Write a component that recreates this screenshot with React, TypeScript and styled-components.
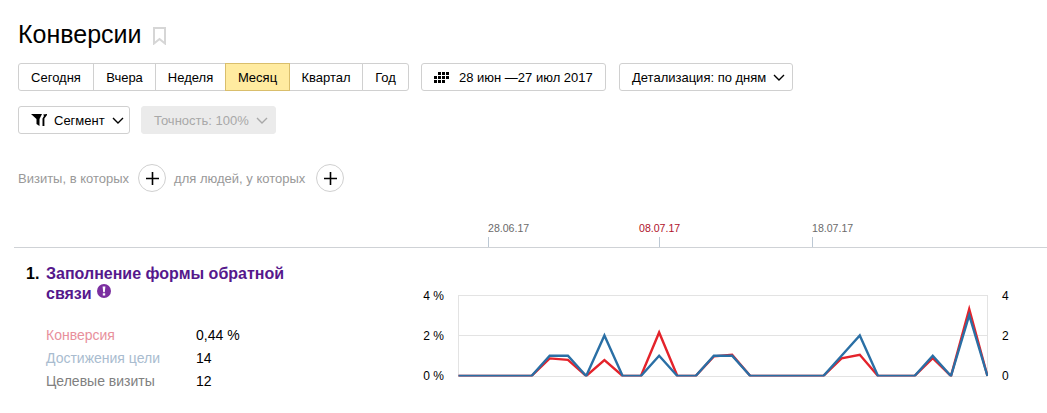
import React from "react";
import styled, { createGlobalStyle } from "styled-components";

const GlobalStyle = createGlobalStyle`
  html, body {
    margin: 0;
    background: #fff;
    overflow: hidden;
  }
  body {
    color: #000;
    font-family: "Liberation Sans", Arial, sans-serif;
    font-size: 13px;
  }
`;

const Page = styled.div`
  height: 413px;
  overflow: hidden;
  width: 1047px;
`;

const Header = styled.div`
  padding: 0 18px;
`;

const TitleRow = styled.div`
  align-items: center;
  box-sizing: border-box;
  display: flex;
  height: 63px;
  padding-top: 5px;
`;

const Title = styled.h1`
  font-size: 25px;
  font-weight: normal;
  margin: 0 11px 0 0;
`;

const Bookmark = styled.svg`
  fill: none;
  height: 18px;
  margin-top: 3px;
  stroke: #d6d6d6;
  stroke-width: 2;
  width: 13px;
`;

const Toolbar = styled.div`
  display: flex;
  height: 28px;
  margin-bottom: 15px;
`;

const Group = styled.div`
  display: flex;
  margin-right: 12px;
`;

const Button = styled.div<{ $active?: boolean; $width: number }>`
  align-items: center;
  background: ${({ $active }) => ($active ? "#ffeba0" : "#fff")};
  border: 1px solid ${({ $active }) => ($active ? "#d9be6c" : "#d0d0d0")};
  box-sizing: border-box;
  display: flex;
  height: 28px;
  justify-content: center;
  margin-left: -1px;
  position: relative;
  width: ${({ $width }) => $width}px;
  z-index: ${({ $active }) => ($active ? 1 : 0)};

  &:first-child {
    border-radius: 3px 0 0 3px;
    margin-left: 0;
  }
  &:last-child {
    border-radius: 0 3px 3px 0;
  }
`;

const Select = styled.div<{ $width: number; $gap?: number; $disabled?: boolean }>`
  align-items: center;
  background: ${({ $disabled }) => ($disabled ? "#ebebeb" : "#fff")};
  border: 1px solid ${({ $disabled }) => ($disabled ? "#ebebeb" : "#d0d0d0")};
  border-radius: 3px;
  box-sizing: border-box;
  color: ${({ $disabled }) => ($disabled ? "#a8a8a8" : "#000")};
  display: flex;
  height: 28px;
  margin-right: ${({ $gap }) => $gap ?? 0}px;
  padding: 0 0 0 12px;
  width: ${({ $width }) => $width}px;
`;

const Chevron = styled.svg`
  fill: none;
  height: 7px;
  margin-left: 7px;
  stroke: currentColor;
  stroke-width: 1.4;
  width: 12px;
`;

const LeadIcon = styled.svg<{ $gap: number }>`
  fill: #000;
  flex-shrink: 0;
  margin-right: ${({ $gap }) => $gap}px;
`;

const FilterRow = styled.div`
  align-items: center;
  color: #999;
  display: flex;
  height: 30px;
  margin-top: 29px;
`;

const AddButton = styled.div<{ $left: number }>`
  align-items: center;
  background: #fff;
  border: 1px solid #d0d0d0;
  border-radius: 50%;
  box-sizing: border-box;
  display: flex;
  height: 28px;
  justify-content: center;
  margin: 0 8px 0 ${({ $left }) => $left}px;
  width: 28px;
`;

const Axis = styled.div`
  border-bottom: 1px solid #cfd2d6;
  display: flex;
  height: 39px;
  margin: 15px 0 0 14px;
  padding-left: 474px;
`;

const Tick = styled.div<{ $width: number; $holiday?: boolean }>`
  border-left: 1px solid #bcc8d4;
  box-sizing: border-box;
  color: ${({ $holiday }) => ($holiday ? "#b0122b" : "#6b6b6b")};
  font-size: 10.6px;
  height: 10px;
  line-height: 12px;
  margin-top: 29px;
  width: ${({ $width }) => $width}px;

  span {
    display: block;
    margin-left: ${({ $holiday }) => ($holiday ? -21 : -1)}px;
    margin-top: -15px;
    white-space: nowrap;
  }
`;

const Goal = styled.div`
  display: flex;
  padding: 16px 0 0 26px;
`;

const GoalInfo = styled.div`
  width: 390px;
`;

const GoalHeading = styled.div`
  display: flex;
`;

const GoalNumber = styled.div`
  font-size: 16px;
  font-weight: bold;
  line-height: 20px;
  width: 20px;
`;

const GoalName = styled.div`
  color: #55188c;
  font-size: 16px;
  font-weight: bold;
  line-height: 20px;
  width: 250px;
`;

const Warning = styled.svg`
  height: 14px;
  margin-left: 5px;
  vertical-align: 1px;
  width: 14px;
`;

const Metrics = styled.div`
  display: grid;
  font-size: 14px;
  grid-auto-rows: 23px;
  grid-template-columns: 150px 1fr;
  line-height: 23px;
  margin: 20px 0 0 20px;
`;

const MetricLabel = styled.div<{ $color: string }>`
  color: ${({ $color }) => $color};
`;

const ChartBox = styled.div`
  display: flex;
  margin-top: 21px;
`;

const ScaleColumn = styled.div<{ $align: string; $width: number }>`
  box-sizing: border-box;
  display: flex;
  flex-direction: column;
  font-size: 12px;
  height: 101px;
  justify-content: space-between;
  line-height: 20px;
  padding-top: 1px;
  text-align: ${({ $align }) => $align};
  width: ${({ $width }) => $width}px;
`;

const Plot = styled.svg`
  display: block;
  height: 100px;
  margin: 0 14px;
  width: 530px;
`;

const periods = [
  { label: "Сегодня", width: 76 },
  { label: "Вчера", width: 63 },
  { label: "Неделя", width: 71 },
  { label: "Месяц", width: 65, active: true },
  { label: "Квартал", width: 74 },
  { label: "Год", width: 47 },
];

const metrics = [
  { label: "Конверсия", color: "#e8909c", value: "0,44 %" },
  { label: "Достижения цели", color: "#a9bccf", value: "14" },
  { label: "Целевые визиты", color: "#808080", value: "12" },
];

const blue = [0, 0, 0, 0, 0, 1, 1, 0, 2, 0, 0, 1, 0, 0, 1, 1, 0, 0, 0, 0, 0, 1, 2, 0, 0, 0, 1, 0, 3, 0];
const red = [0, 0, 0, 0, 0, 0.87, 0.8, 0, 0.78, 0, 0, 2.15, 0, 0, 0.97, 1.05, 0, 0, 0, 0, 0, 0.87, 1.05, 0, 0, 0, 0.88, 0, 3.3, 0];

const toPoints = (values: number[]) =>
  values.map((v, i) => `${0.5 + i * 18.24},${91 - v * 20.25}`).join(" ");

const ChevronIcon = () => (
  <Chevron viewBox="0 0 12 7">
    <path d="M1 1l5 5 5-5" />
  </Chevron>
);

const FilterIcon = () => (
  <LeadIcon $gap={7} width="16" height="12" viewBox="0 0 16 12">
    <path d="M0 0h11L8.5 5v7L5.5 10V5zM12.2 0.6 16 0v1l-2.6 3.6V12h-1.9V4.6L13 2z" />
  </LeadIcon>
);

const CalendarIcon = () => (
  <LeadIcon $gap={10} width="15" height="11" viewBox="0 0 15 11">
    <path d="M4 0h3v3H4zM8 0h3v3H8zM12 0h3v3h-3zM0 4h3v3H0zM4 4h3v3H4zM8 4h3v3H8zM12 4h3v3h-3zM0 8h3v3H0zM4 8h3v3H4zM8 8h3v3H8z" />
  </LeadIcon>
);

const PlusIcon = () => (
  <svg width="13" height="13" viewBox="0 0 13 13">
    <path d="M0 6.5h13M6.5 0v13" stroke="#000" strokeWidth="1.6" />
  </svg>
);

const App = () => (
  <Page>
    <GlobalStyle />
    <Header>
      <TitleRow>
        <Title>Конверсии</Title>
        <Bookmark viewBox="0 0 13 18">
          <path d="M1 1h11v15.5L6.5 12 1 16.5z" />
        </Bookmark>
      </TitleRow>
      <Toolbar>
        <Group>
          {periods.map((p) => (
            <Button key={p.label} $width={p.width} $active={p.active}>
              {p.label}
            </Button>
          ))}
        </Group>
        <Select $width={185} $gap={13}>
          <CalendarIcon />
          28 июн —27 июл 2017
        </Select>
        <Select $width={174}>
          Детализация: по дням
          <ChevronIcon />
        </Select>
      </Toolbar>
      <Toolbar>
        <Select $width={112} $gap={11}>
          <FilterIcon />
          Сегмент
          <ChevronIcon />
        </Select>
        <Select $width={135} $disabled>
          Точность: 100%
          <ChevronIcon />
        </Select>
      </Toolbar>
      <FilterRow>
        Визиты, в которых
        <AddButton $left={9}>
          <PlusIcon />
        </AddButton>
        для людей, у которых
        <AddButton $left={11}>
          <PlusIcon />
        </AddButton>
      </FilterRow>
    </Header>
    <Axis>
      <Tick $width={171}>
        <span>28.06.17</span>
      </Tick>
      <Tick $width={153} $holiday>
        <span>08.07.17</span>
      </Tick>
      <Tick $width={100}>
        <span>18.07.17</span>
      </Tick>
    </Axis>
    <Goal>
      <GoalInfo>
        <GoalHeading>
          <GoalNumber>1.</GoalNumber>
          <GoalName>
            Заполнение формы обратной связи
            <Warning viewBox="0 0 14 14">
              <circle cx="7" cy="7" r="7" fill="#7b2fa0" />
              <path d="M5.6 2.5h2.8L7.8 8.2H6.2zM5.8 9.2h2.4v2.3H5.8z" fill="#fff" />
            </Warning>
          </GoalName>
        </GoalHeading>
        <Metrics>
          {metrics.map((m) => (
            <React.Fragment key={m.label}>
              <MetricLabel $color={m.color}>{m.label}</MetricLabel>
              <div>{m.value}</div>
            </React.Fragment>
          ))}
        </Metrics>
      </GoalInfo>
      <ChartBox>
        <ScaleColumn $align="right" $width={28}>
          <div>4 %</div>
          <div>2 %</div>
          <div>0 %</div>
        </ScaleColumn>
        <Plot viewBox="0 0 530 100">
          <defs>
            <clipPath id="plot-area">
              <rect x="0" y="0" width="530" height="91.5" />
            </clipPath>
          </defs>
          <path d="M0.5 10V91M529.5 10V91M0 10.5h530M0 50.5h530M0 91.5h530" fill="none" stroke="#e3e3e3" />
          <g clipPath="url(#plot-area)">
            <polyline points={toPoints(red)} fill="none" stroke="#e4232b" strokeWidth="2.4" />
            <polyline points={toPoints(blue)} fill="none" stroke="#2a6fa5" strokeWidth="2.4" />
          </g>
        </Plot>
        <ScaleColumn $align="left" $width={20}>
          <div>4</div>
          <div>2</div>
          <div>0</div>
        </ScaleColumn>
      </ChartBox>
    </Goal>
  </Page>
);

export default App;
